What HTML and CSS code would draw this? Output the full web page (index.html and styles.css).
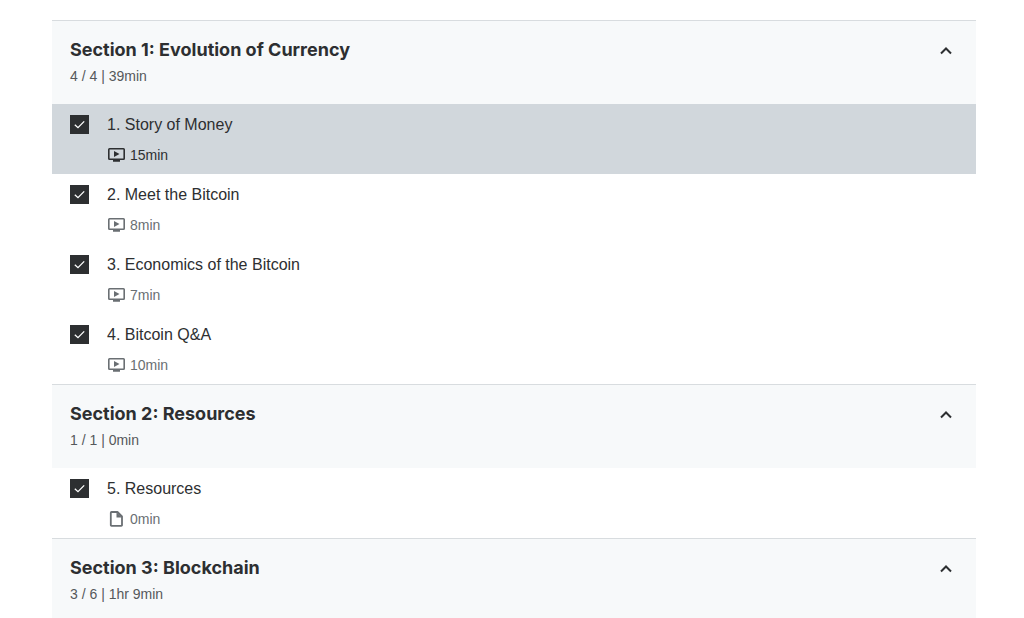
FILE: index.html
```html
<!DOCTYPE html>
<html lang="en">

<head>
    <meta charset="UTF-8">
    <meta name="viewport" content="width=device-width, initial-scale=1.0">
    <title>Course content</title>
    <link rel="stylesheet" href="styles.css">
</head>

<body>
    <!-- shared icons -->
    <svg class="sprite" aria-hidden="true">
        <symbol id="icon-video" viewBox="0 0 19 16">
            <path fill="currentColor" fill-rule="evenodd" d="M2.500 1h14A1.500 1.500 0 0 1 18 2.500v9a1.500 1.500 0 0 1-1.500 1.500H13v1.800H6V13H2.500A1.500 1.500 0 0 1 1 11.500v-9A1.500 1.500 0 0 1 2.500 1zm.1 1.600v8.800h13.800V2.600z" />
            <path fill="currentColor" d="M7 4v6l5.500-3z" />
        </symbol>
        <symbol id="icon-file" viewBox="0 0 19 16">
            <path fill="none" stroke="currentColor" stroke-width="1.800" stroke-linejoin="round" d="M4.500 1h6l4.500 4.500v8.700a.7.7 0 0 1-.7.7H4.500a.7.7 0 0 1-.7-.7V1.700A.7.7 0 0 1 4.500 1z" />
            <path fill="currentColor" d="M9.500 1v5.400H15z" />
        </symbol>
        <symbol id="icon-up" viewBox="0 0 12 8">
            <path fill="none" stroke="currentColor" stroke-width="2" d="M1 6.500l5-5 5 5" />
        </symbol>
        <symbol id="icon-tick" viewBox="0 0 19 19">
            <path fill="none" stroke="#fff" stroke-width="1.300" d="M4.800 9.700l3.200 3 6.200-6.300" />
        </symbol>
    </svg>

    <main class="curriculum">
        <section>
            <button type="button" class="section-header" aria-expanded="true">
                <span class="section-text">
                    <span class="section-title">Section 1: Evolution of Currency</span>
                    <span class="section-info">4 / 4 | 39min</span>
                </span>
                <svg class="arrow"><use href="#icon-up" /></svg>
            </button>
            <ul class="lecture-list">
                <li class="lecture active">
                    <span class="check"><input type="checkbox" id="lec1" checked><svg><use href="#icon-tick" /></svg></span>
                    <div>
                        <label for="lec1">1. Story of Money</label>
                        <p class="time"><svg><use href="#icon-video" /></svg>15min</p>
                    </div>
                </li>
                <li class="lecture">
                    <span class="check"><input type="checkbox" id="lec2" checked><svg><use href="#icon-tick" /></svg></span>
                    <div>
                        <label for="lec2">2. Meet the Bitcoin</label>
                        <p class="time"><svg><use href="#icon-video" /></svg>8min</p>
                    </div>
                </li>
                <li class="lecture">
                    <span class="check"><input type="checkbox" id="lec3" checked><svg><use href="#icon-tick" /></svg></span>
                    <div>
                        <label for="lec3">3. Economics of the Bitcoin</label>
                        <p class="time"><svg><use href="#icon-video" /></svg>7min</p>
                    </div>
                </li>
                <li class="lecture">
                    <span class="check"><input type="checkbox" id="lec4" checked><svg><use href="#icon-tick" /></svg></span>
                    <div>
                        <label for="lec4">4. Bitcoin Q&amp;A</label>
                        <p class="time"><svg><use href="#icon-video" /></svg>10min</p>
                    </div>
                </li>
            </ul>
        </section>

        <section>
            <button type="button" class="section-header" aria-expanded="true">
                <span class="section-text">
                    <span class="section-title">Section 2: Resources</span>
                    <span class="section-info">1 / 1 | 0min</span>
                </span>
                <svg class="arrow"><use href="#icon-up" /></svg>
            </button>
            <ul class="lecture-list">
                <li class="lecture">
                    <span class="check"><input type="checkbox" id="lec5" checked><svg><use href="#icon-tick" /></svg></span>
                    <div>
                        <label for="lec5">5. Resources</label>
                        <p class="time"><svg><use href="#icon-file" /></svg>0min</p>
                    </div>
                </li>
            </ul>
        </section>

        <section>
            <button type="button" class="section-header" aria-expanded="true">
                <span class="section-text">
                    <span class="section-title">Section 3: Blockchain</span>
                    <span class="section-info">3 / 6 | 1hr 9min</span>
                </span>
                <svg class="arrow"><use href="#icon-up" /></svg>
            </button>
        </section>
    </main>
</body>

</html>
```

FILE: styles.css
```css
* {
    box-sizing: border-box;
}

body {
    margin: 0;
    background-color: #fff;
    color: #2d2f31;
    font-family: "Liberation Sans", Arial, sans-serif;
}

.sprite {
    display: none;
}

.curriculum {
    margin: 20px 48px 0 52px;
}

.section-header {
    display: flex;
    justify-content: space-between;
    align-items: flex-start;
    width: 100%;
    height: 84px;
    padding: 16px 24px 0 18px;
    border: none;
    border-top: 1px solid #d8dcdf;
    background-color: #f7f9fa;
    color: inherit;
    font-family: inherit;
    text-align: left;
    cursor: pointer;
}

.section-title,
.section-info {
    display: block;
}

.section-title {
    font-family: Inter, "Liberation Sans", sans-serif;
    font-size: 18px;
    font-weight: 700;
    line-height: 26px;
}

.section-info {
    font-size: 14px;
    line-height: 26px;
    color: #55585b;
}

.arrow {
    width: 12px;
    height: 8px;
    margin-top: 10px;
}

.lecture-list {
    margin: 0;
    padding: 0;
    list-style: none;
}

.lecture {
    display: flex;
    gap: 18px;
    height: 70px;
    padding: 11px 18px 0;
}

.lecture.active {
    background-color: #d1d7dc;
}

/* custom checkbox, the tick lies over the input */
.check {
    position: relative;
    width: 19px;
    height: 19px;
}

.check input {
    display: block;
    appearance: none;
    width: 100%;
    height: 100%;
    margin: 0;
    border: 1px solid #2d2f31;
    cursor: pointer;
}

.check input:checked {
    background-color: #2d2f31;
}

.check svg {
    position: absolute;
    inset: 0;
    width: 100%;
    height: 100%;
    pointer-events: none;
}

.check input:not(:checked) + svg {
    display: none;
}

.lecture label {
    display: block;
    font-size: 16px;
    line-height: 20px;
}

.time {
    display: flex;
    align-items: center;
    gap: 4px;
    margin: 10px 0 0;
    font-size: 14px;
    line-height: 20px;
    color: #6a6f73;
}

.time svg {
    width: 19px;
    height: 16px;
}

.active .time {
    color: #2d2f31;
}
```
